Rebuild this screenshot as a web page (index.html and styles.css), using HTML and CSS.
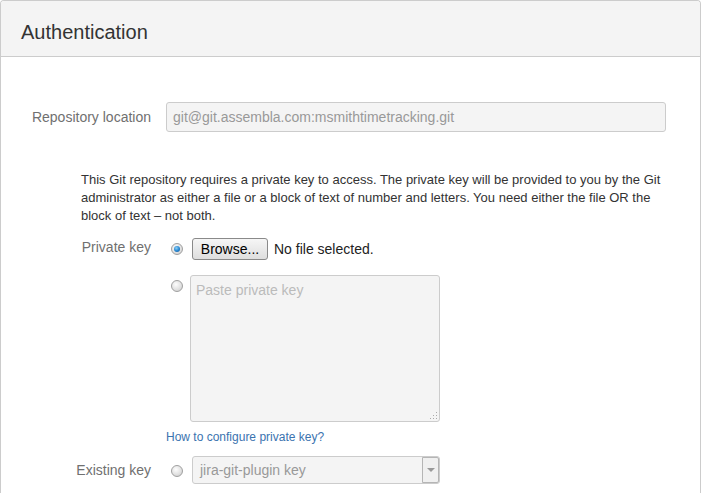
FILE: index.html
```html
<!DOCTYPE html>
<html>
<head>
<meta charset="utf-8">
<link rel="stylesheet" href="styles.css">
</head>
<body>
<div class="panel">
  <div class="panel-header"><h2 class="panel-title">Authentication</h2></div>
  <div class="panel-body">
    <div class="field-row">
      <label class="field-label">Repository location</label>
      <div class="text-input">git@git.assembla.com:msmithtimetracking.git</div>
    </div>
    <p class="help-text">This Git repository requires a private key to access. The private key will be provided to you by the Git administrator as either a file or a block of text of number and letters. You need either the file OR the block of text – not both.</p>
    <div class="key-row key-row-file">
      <label class="field-label">Private key</label>
      <span class="radio-cell"><span class="radio checked"></span></span>
      <span class="file-btn">Browse...</span>
      <span class="file-name">No file selected.</span>
    </div>
    <div class="key-row key-row-text">
      <span class="field-label"></span>
      <span class="radio-cell"><span class="radio"></span></span>
      <div class="textarea"><span class="placeholder">Paste private key</span><span class="grip"></span></div>
    </div>
    <div class="link-row">
      <span class="field-label"></span>
      <a class="help-link">How to configure private key?</a>
    </div>
    <div class="key-row key-row-existing">
      <label class="field-label">Existing key</label>
      <span class="radio-cell"><span class="radio"></span></span>
      <div class="select"><span class="select-value">jira-git-plugin key</span><span class="select-arrow"><span class="caret"></span></span></div>
    </div>
  </div>
</div>
</body>
</html>
```
FILE: styles.css
```css
* { box-sizing: border-box; }
html, body { margin: 0; padding: 0; background: #fff; }
body {
  font-family: Arial, "Liberation Sans", Helvetica, sans-serif;
  font-size: 14px;
  color: #333;
  height: 493px;
  overflow: hidden;
}
.panel {
  width: 701px;
  border: 1px solid #ccc;
  border-bottom: none;
  border-radius: 4px 4px 0 0;
  height: 500px;
}
.panel-header {
  background: #f4f4f4;
  border-bottom: 1px solid #ccc;
  border-radius: 3px 3px 0 0;
  padding: 19px 20px 12px;
}
.panel-title {
  margin: 0;
  font-size: 20px;
  line-height: 24px;
  font-weight: normal;
  color: #333;
}
.panel-body {
  padding-top: 45px;
}
.field-row {
  display: flex;
  align-items: center;
  gap: 15px;
}
.field-label {
  width: 150px;
  flex: none;
  text-align: right;
  color: #707070;
  font-size: 14px;
}
.text-input {
  width: 500px;
  height: 30px;
  background: #f4f4f4;
  border: 1px solid #ccc;
  border-radius: 3px;
  color: #999;
  padding: 0 6px;
  line-height: 28px;
}
.help-text {
  margin: 39px 0 0 80px;
  width: 590px;
  font-size: 13px;
  line-height: 18px;
  color: #333;
}
.key-row {
  display: flex;
  align-items: flex-start;
}
.key-row .field-label { margin-right: 15px; }
.link-row .field-label { margin-right: 15px; }
.key-row-file {
  margin-top: 13px;
  align-items: center;
  height: 22px;
}
.key-row-file .field-label { position: relative; top: -2px; }
.radio-cell {
  width: 24px;
  flex: none;
  display: flex;
  padding-left: 5px;
}
.radio {
  width: 12px;
  height: 12px;
  border-radius: 50%;
  border: 1px solid #a0a0a0;
  background: radial-gradient(circle at 40% 35%, #fdfdfd 0%, #e2e2e2 55%, #c8c8c8 100%);
  display: flex;
  align-items: center;
  justify-content: center;
}
.radio.checked::after {
  content: "";
  width: 6px;
  height: 6px;
  border-radius: 50%;
  background: radial-gradient(circle at 40% 35%, #8fd0f5 0%, #2a8ad4 50%, #0f4f8f 100%);
}
.file-btn {
  margin-left: 2px;
  height: 22px;
  width: 76px;
  border: 1px solid #8a8a8a;
  border-radius: 3px;
  background: linear-gradient(#f6f6f6, #dedede);
  color: #000;
  font-size: 14px;
  line-height: 20px;
  text-align: center;
}
.file-name {
  margin-left: 6px;
  color: #222;
}
.key-row-text { margin-top: 15px; }
.key-row-text .radio-cell { padding-top: 5px; }
.textarea {
  width: 250px;
  height: 147px;
  background: #f4f4f4;
  border: 1px solid #ccc;
  border-radius: 3px;
  padding: 4px 5px;
  position: relative;
}
.placeholder {
  color: #bbb;
  font-size: 14px;
  line-height: 20px;
}
.grip {
  position: absolute;
  right: 2px;
  bottom: 2px;
  width: 8px;
  height: 8px;
  background:
    radial-gradient(circle, #aaa 0.7px, transparent 0.8px) 0 0 / 3px 3px;
  clip-path: polygon(100% 0, 100% 100%, 0 100%);
}
.link-row {
  display: flex;
  margin-top: 7px;
}
.help-link {
  color: #3b73af;
  font-size: 12px;
  line-height: 16px;
  text-decoration: none;
}
.key-row-existing {
  margin-top: 11px;
  align-items: center;
  height: 28px;
}
.key-row-existing .radio-cell { padding-top: 1px; }
.select {
  margin-left: 2px;
  width: 248px;
  height: 28px;
  background: #f4f4f4;
  border: 1px solid #ccc;
  border-radius: 3px;
  display: flex;
  align-items: stretch;
}
.select-value {
  flex: 1;
  color: #999;
  padding-left: 7px;
  line-height: 26px;
}
.select-arrow {
  width: 17px;
  border: 1px solid #b5b5b5;
  border-radius: 0 2px 2px 0;
  background: #f0f0f0;
  display: flex;
  align-items: center;
  justify-content: center;
}
.caret {
  width: 0;
  height: 0;
  border-left: 4px solid transparent;
  border-right: 4px solid transparent;
  border-top: 4px solid #999;
}
```
